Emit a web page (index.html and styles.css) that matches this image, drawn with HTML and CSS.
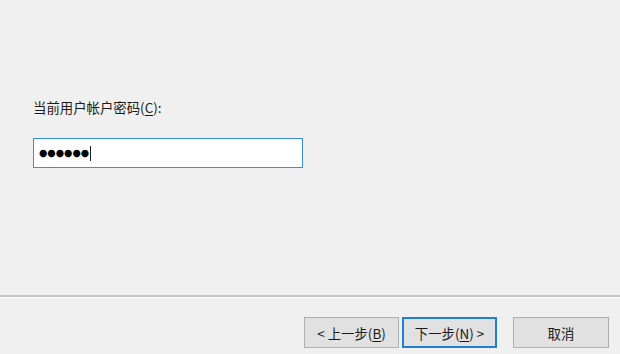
FILE: index.html
```html
<!DOCTYPE html>
<html>
<head>
    <meta charset="UTF-8">
    <title>更改密码</title>
    <link rel="stylesheet" href="styles.css">
</head>
<body>
    <div class="wizard">
        <div class="content">
            <label class="field-label" for="pwd">当前用户帐户密码(<u>C</u>):</label>
            <div class="pwd-box" id="pwd">
                <span class="dots">●●●●●●</span><span class="caret"></span>
            </div>
        </div>
        <div class="footer">
            <button class="btn" type="button">&lt; 上一步(<u>B</u>)</button>
            <button class="btn btn-default" type="button">下一步(<u>N</u>) &gt;</button>
            <button class="btn btn-cancel" type="button">取消</button>
        </div>
    </div>
</body>
</html>
```

FILE: styles.css
```css
body {
  margin: 0;
  background-color: #f0f0f0;
  font-family: "Noto Sans CJK SC", "Liberation Sans", sans-serif;
  font-size: 13px;
  color: #1a1a1a;
}

.wizard {
  width: 620px;
  height: 354px;
  display: flex;
  flex-direction: column;
}

.content {
  height: 295px;
  padding: 96px 0 0 33px;
  box-sizing: border-box;
  display: flex;
  flex-direction: column;
  align-items: flex-start;
}

.field-label {
  font-size: 13.4px;
  line-height: 22px;
  margin-bottom: 20px;
}

.field-label u,
.btn u {
  text-decoration-thickness: 1px;
  text-underline-offset: 2px;
}

.pwd-box {
  width: 270px;
  height: 30px;
  box-sizing: border-box;
  border: 1px solid #3a8fdc;
  background-color: #fff;
  display: flex;
  align-items: center;
  padding-left: 5px;
}

.dots {
  font-family: "DejaVu Sans", sans-serif;
  font-size: 9.6px;
  letter-spacing: 0;
  color: #000;
  line-height: 1;
}

.caret {
  width: 1px;
  height: 15px;
  margin-left: 1px;
  background-color: #222;
}

.footer {
  flex: 1;
  border-top: 2px solid #c4c4c4;
  box-shadow: inset 0 1px 0 #fcfcfc;
  display: flex;
  justify-content: flex-end;
  align-items: flex-start;
  padding: 20px 11px 0 0;
}

.btn {
  width: 95px;
  height: 31px;
  margin-left: 3px;
  border: 1px solid #adadad;
  background-color: #e1e1e1;
  font-family: "Noto Sans CJK SC", "Liberation Sans", sans-serif;
  font-size: 13.4px;
  color: #1a1a1a;
  padding: 0;
}

.btn-default {
  border: 2px solid #1f7fd6;
}

.btn-cancel {
  margin-left: 16px;
  width: 96px;
}
```
